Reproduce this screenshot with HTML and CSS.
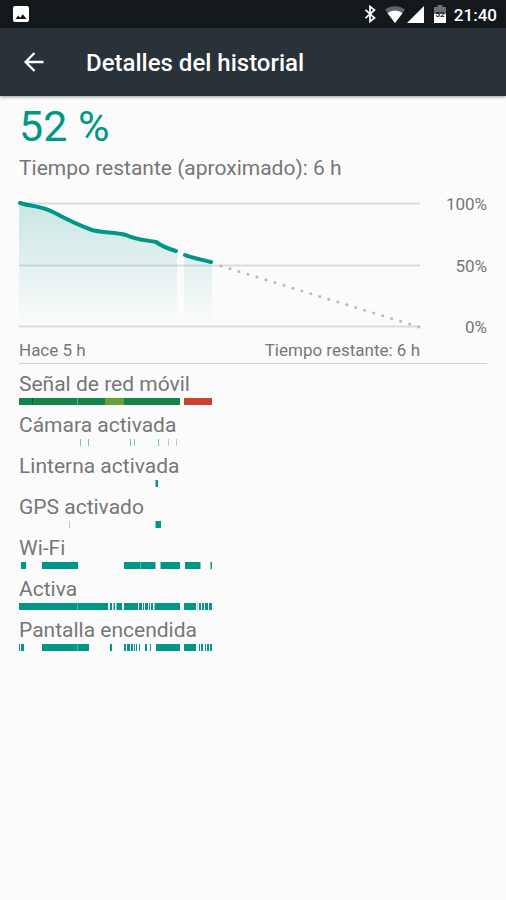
FILE: index.html
```html
<!DOCTYPE html>
<html lang="es">
<head>
<meta charset="utf-8">
<meta name="viewport" content="width=device-width, initial-scale=1">
<title>Detalles del historial</title>
<link rel="stylesheet" href="styles.css">
</head>
<body>
<div class="status">
  <svg class="icon-photo" viewBox="0 0 16 16" aria-hidden="true"><path fill="#fff" fill-rule="evenodd" d="M2 0h12a2 2 0 0 1 2 2v12a2 2 0 0 1-2 2H2a2 2 0 0 1-2-2V2a2 2 0 0 1 2-2zM2.500 13h11L9.800 8.200l-2.700 3.500L5.200 9.400z"/></svg>
  <div class="status-end">
    <svg class="icon-bt" viewBox="0 0 12 18" aria-hidden="true"><path fill="none" stroke="#fff" stroke-width="1.700" d="M1.500 4.800l9 8.200L6 16.500v-15L10.500 5l-9 8.200"/></svg>
    <svg class="icon-wifi" viewBox="0 0 20 17" aria-hidden="true"><path fill="#5f6567" d="M0 3.800C5.500-.8 14.500-.8 20 3.800L10 17z"/><path fill="#fff" d="M2.600 7.200c4.400-3.600 10.400-3.600 14.800 0L10 17z"/></svg>
    <svg class="icon-cell" viewBox="0 0 17 17" aria-hidden="true"><path fill="#fff" d="M17 0v17H0z"/></svg>
    <svg class="icon-battery" viewBox="0 0 12 18" aria-hidden="true"><path fill="#6b7173" d="M3.500 0h5v2H12v8H0V2h3.500z"/><path fill="#fff" d="M0 9h12v9H0z"/><text class="battery-text" x="6" y="12" text-anchor="middle">52</text></svg>
    <span class="clock">21:40</span>
  </div>
</div>
<header class="toolbar">
  <button class="back" type="button" aria-label="Atrás"><svg viewBox="0 0 20 20" aria-hidden="true"><path fill="none" stroke="#fff" stroke-width="2.300" d="M19.500 10H2M10.500 1L1.600 10l8.900 9"/></svg></button>
  <h1>Detalles del historial</h1>
</header>
<main>
  <p class="level">52 %</p>
  <p class="remaining">Tiempo restante (aproximado): 6 h</p>
  <section class="usage">
    <svg class="chart" viewBox="0 0 401 128" preserveAspectRatio="none" aria-hidden="true">
      <defs><linearGradient id="fade" gradientUnits="userSpaceOnUse" x1="0" y1="2" x2="0" y2="126"><stop offset="0" stop-color="#009688" stop-opacity=".2"/><stop offset=".4" stop-color="#009688" stop-opacity=".12"/><stop offset="1" stop-color="#009688" stop-opacity="0"/></linearGradient></defs>
      <path class="grid" d="M0 2.500h401M0 64.500h401M0 125.500h401"/>
      <path fill="url(#fade)" d="M0 2C10 5 22 5 34 11C47 18 62 25 73 29C84 32 96 31 107 34C117 39 127 39 137 41C144 46 150 48 158 50V126H0zM165 54L193 62V126H165z"/>
      <path class="curve" d="M1 2C10 5 22 5 34 11C47 18 62 25 73 29C84 32 96 31 107 34C117 39 127 39 137 41C144 46 150 48 157 50M166 54C173 57 184 59 192 61"/>
      <path class="forecast" d="M202 65L400 126"/>
    </svg>
    <div class="scale"><span>100%</span><span>50%</span><span>0%</span></div>
    <div class="times"><span>Hace 5 h</span><span>Tiempo restante: 6 h</span></div>
  </section>
  <section class="events">
    <h2>Señal de red móvil</h2>
    <svg viewBox="0 0 401 7" preserveAspectRatio="none"><path class="good" d="M0 0h86v7H0zM105 0h56v7h-56z"/><path class="fair" d="M86 0h19v7H86z"/><path class="none" d="M165 0h28v7h-28z"/><path class="seam" d="M58 0h1v7h-1z"/><path class="dark" d="M13 0h1v7h-1z"/></svg>
    <h2>Cámara activada</h2>
    <svg viewBox="0 0 401 7" preserveAspectRatio="none"><path class="faint" d="M61 0h1v7h-1zM69 0h1v7h-1zM111 0h1v7h-1zM115 0h1v7h-1zM139 0h1v7h-1z"/><path class="fainter" d="M149 0h1v7h-1zM157 0h1v7h-1z"/></svg>
    <h2>Linterna activada</h2>
    <svg viewBox="0 0 401 7" preserveAspectRatio="none"><path d="M136.500 0h2.500v7h-2.500z"/></svg>
    <h2>GPS activado</h2>
    <svg viewBox="0 0 401 7" preserveAspectRatio="none"><path class="fainter" d="M50 0h1v7h-1z"/><path d="M136.500 0h5.500v7h-5.500z"/></svg>
    <h2>Wi-Fi</h2>
    <svg viewBox="0 0 401 7" preserveAspectRatio="none"><path d="M2 0h5v7H2zM23 0h36v7H23zM105 0h31.500v7H105zM141.500 0H161v7h-19.500zM166 0h15.500v7H166zM191.500 0h1.500v7h-1.500z"/><path class="seam" d="M121 0h1v7h-1z"/></svg>
    <h2>Activa</h2>
    <svg viewBox="0 0 401 7" preserveAspectRatio="none"><path d="M0 0h89v7H0zM91 0h2v7h-2zM94.500 0H96v7h-1.500zM97.500 0h5.500v7h-5.500zM105 0h14v7h-14zM120 0h3v7h-3zM124 0h1v7h-1zM126 0h3v7h-3zM130 0h1v7h-1zM132 0h2v7h-2zM135.500 0H161v7h-25.500zM165 0h12v7h-12zM180 0h2v7h-2zM183 0h2v7h-2zM186 0h3v7h-3zM190 0h3v7h-3z"/><path class="seam" d="M58 0h1v7h-1z"/><path class="fainter" d="M178 0h1v7h-1z"/></svg>
    <h2>Pantalla encendida</h2>
    <svg viewBox="0 0 401 7" preserveAspectRatio="none"><path d="M0 0h1v7H0zM2 0h3v7H2zM23 0h47v7H23zM91 0h2v7h-2zM105 0h2v7h-2zM108 0h3v7h-3zM112 0h2v7h-2zM115 0h1v7h-1zM117 0h1v7h-1zM120 0h1v7h-1zM126 0h2v7h-2zM131 0h1v7h-1zM137 0h24v7h-24zM165 0h12v7h-12zM180 0h1v7h-1zM182 0h2v7h-2zM186 0h1v7h-1zM188 0h2v7h-2zM191 0h2v7h-2z"/><path class="seam" d="M58 0h1v7h-1z"/></svg>
  </section>
</main>
</body>
</html>
```

FILE: styles.css
```css
* { box-sizing: border-box; }
body { margin: 0; min-height: 100vh; background: #fbfbfb; color: #777; font-family: Roboto, sans-serif; }
svg { display: block; }
h1, h2, p { margin: 0; font-weight: 400; }
.status { display: flex; align-items: center; justify-content: space-between; height: 28px; padding: 0 9px 0 13px; background: #13181b; }
.status-end { display: flex; align-items: center; }
.icon-photo { width: 16px; height: 16px; }
.icon-bt { width: 12px; height: 18px; margin-right: 9px; }
.icon-wifi { width: 20px; height: 17px; margin-right: 2px; }
.icon-cell { width: 17px; height: 17px; margin-right: 10px; }
.icon-battery { width: 12px; height: 18px; margin-right: 8px; }
.battery-text { font-size: 8px; font-weight: 700; fill: #13181b; }
.clock { color: #fff; font-size: 17px; font-weight: 500; line-height: 28px; padding-top: 2px; }
.toolbar { display: flex; align-items: center; height: 68px; padding-left: 20px; background: #283238; box-shadow: 0 1px 3px rgba(0, 0, 0, .4); color: #fff; }
.back { display: flex; align-items: center; justify-content: center; width: 28px; height: 48px; padding: 0; border: 0; background: none; }
.back svg { width: 20px; height: 20px; }
h1 { margin-left: 38px; padding-top: 2px; font-size: 24px; font-weight: 500; }
main { padding: 5px 19px 20px; }
.level { color: #009688; font-size: 43px; line-height: 50px; }
.remaining { font-size: 21px; line-height: 34px; }
.usage { display: grid; grid-template-columns: 1fr 67px; padding-top: 16px; border-bottom: 1px solid #ccd5d3; font-size: 17px; line-height: 20px; }
.chart { width: 100%; height: 128px; overflow: visible; }
.grid, .curve, .forecast { fill: none; vector-effect: non-scaling-stroke; }
.grid { stroke: #d9dddd; stroke-width: 2; }
.curve { stroke: #009688; stroke-width: 4; stroke-linecap: round; }
.forecast { stroke: #b5b8b7; stroke-width: 3; stroke-linecap: round; stroke-dasharray: 0 9.4; }
.scale { display: flex; flex-direction: column; justify-content: space-between; margin: -7px 0 -8px; text-align: right; }
.times { display: flex; justify-content: space-between; padding: 11px 0 3px; }
.events { padding-top: 7px; }
.events h2 { font-size: 21px; line-height: 27px; }
.events svg { width: calc(100% - 67px); height: 7px; margin-bottom: 7px; fill: #009688; }
.events .good { fill: #12864a; }
.events .fair { fill: #689f38; }
.events .none { fill: #c9412f; }
.events .seam { fill: #4db6ac; }
.events .dark { fill: #0b5a35; }
.events .faint { fill: #70c5bc; }
.events .fainter { fill: #add3cd; }
```
